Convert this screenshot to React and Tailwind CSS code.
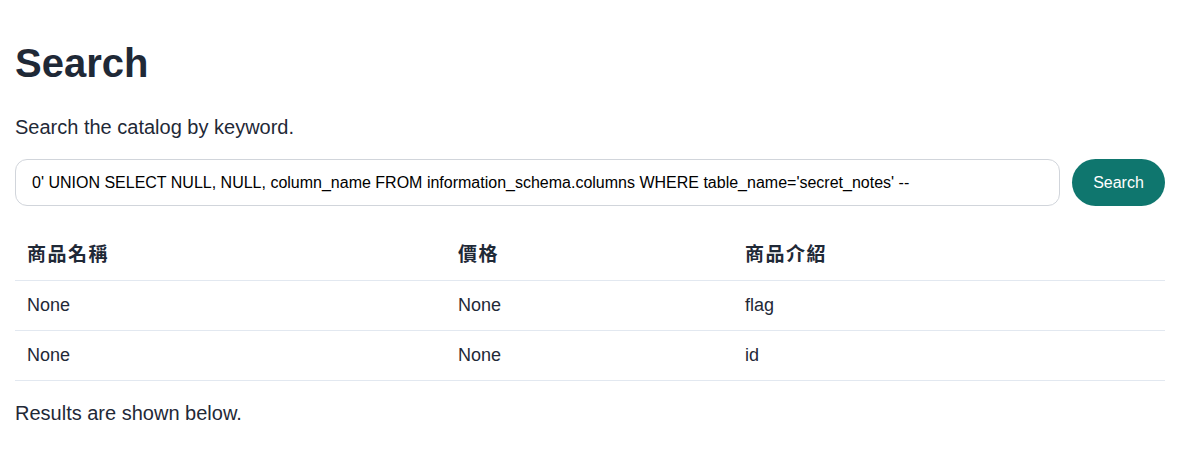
import React from "react";

const rows = [
  ["None", "None", "flag"],
  ["None", "None", "id"],
];

export default function App() {
  return (
    <div
      className="min-h-[458px] bg-white px-[15px] pt-[39px] text-[#1f2937]"
      style={{ fontFamily: '"Liberation Sans", Arial, "Noto Sans CJK TC", sans-serif' }}
    >
      <h1 className="text-[40px] font-bold leading-[48px]">Search</h1>
      <p className="mt-[26px] text-[20px] leading-[28px]">Search the catalog by keyword.</p>
      <div className="mt-[18px] flex gap-3">
        <input
          readOnly
          value="0' UNION SELECT NULL, NULL, column_name FROM information_schema.columns WHERE table_name='secret_notes' --"
          className="h-[47px] flex-1 rounded-xl border border-[#d1d5db] bg-white px-4 text-[16px] text-black outline-none"
          style={{ fontFamily: '"Liberation Sans", Arial, sans-serif' }}
        />
        <button className="h-[47px] w-[93px] rounded-full bg-[#0f766e] text-[16px] font-light text-white">
          Search
        </button>
      </div>
      <div className="mt-[24px]">
        <div className="grid h-[51px] grid-cols-[431px_287px_1fr] items-center border-b border-[#e2e8f0] text-[19px] font-bold">
          <div className="px-3 tracking-[1.5px]">商品名稱</div>
          <div className="px-3 tracking-[1.5px]">價格</div>
          <div className="px-3 tracking-[1.5px]">商品介紹</div>
        </div>
        {rows.map((r, i) => (
          <div
            key={i}
            className="grid h-[50px] grid-cols-[431px_287px_1fr] items-center border-b border-[#e2e8f0] text-[18px]"
          >
            {r.map((c, j) => (
              <div key={j} className="px-3">
                {c}
              </div>
            ))}
          </div>
        ))}
      </div>
      <p className="mt-[18px] text-[20px] leading-[28px]">Results are shown below.</p>
    </div>
  );
}
